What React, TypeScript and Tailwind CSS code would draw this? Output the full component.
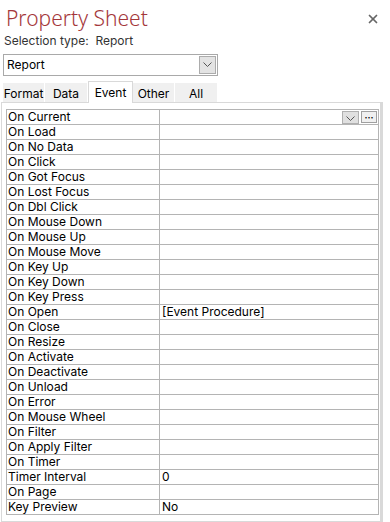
import { X } from "lucide-react";

const rows: [string, string][] = [
  ["On Current", ""],
  ["On Load", ""],
  ["On No Data", ""],
  ["On Click", ""],
  ["On Got Focus", ""],
  ["On Lost Focus", ""],
  ["On Dbl Click", ""],
  ["On Mouse Down", ""],
  ["On Mouse Up", ""],
  ["On Mouse Move", ""],
  ["On Key Up", ""],
  ["On Key Down", ""],
  ["On Key Press", ""],
  ["On Open", "[Event Procedure]"],
  ["On Close", ""],
  ["On Resize", ""],
  ["On Activate", ""],
  ["On Deactivate", ""],
  ["On Unload", ""],
  ["On Error", ""],
  ["On Mouse Wheel", ""],
  ["On Filter", ""],
  ["On Apply Filter", ""],
  ["On Timer", ""],
  ["Timer Interval", "0"],
  ["On Page", ""],
  ["Key Preview", "No"],
];

const tabs = ["Format", "Data", "Event", "Other", "All"];
const tabWidths = ["w-[42px]", "w-[43px]", "w-[45px]", "w-[42px]", "w-[43px]"];

function Chevron() {
  return (
    <svg width="9" height="6" viewBox="0 0 9 6" fill="none">
      <path d="M0.5 0.5 L4.5 4.5 L8.5 0.5" stroke="#555" strokeWidth="1" />
    </svg>
  );
}

export default function App() {
  return (
    <div
      className="w-[390px] h-[522px] bg-white text-black overflow-hidden"
      style={{ fontFamily: 'Inter, "Noto Sans", sans-serif' }}
    >
      <div className="flex items-start justify-between pl-[6px] pr-[10px] pt-[4px] h-[32px]">
        <h1
          className="text-[21px] leading-[28px] font-light text-[#a4373a]"
          style={{ fontFamily: '"Noto Sans", sans-serif' }}
        >
          Property Sheet
        </h1>
        <X className="w-[14px] h-[14px] mt-[8px] text-[#666]" strokeWidth={3} />
      </div>
      <div className="pl-[4px] text-[12px] leading-[18px] text-[#333]">Selection type:&nbsp; Report</div>

      <div className="ml-[3px] mt-[4px] w-[215px] h-[22px] border border-[#a9a9a9] flex items-center justify-between pl-[3px] pr-[1px]">
        <span className="text-[12px] leading-none">Report</span>
        <div className="w-[17px] h-[18px] bg-[#e3e3e3] border border-[#acacac] flex items-center justify-center">
          <Chevron />
        </div>
      </div>

      <div className="flex items-end ml-[3px] mt-[5px] h-[21px]">
        {tabs.map((t, i) =>
          t === "Event" ? (
            <div
              key={t}
              className={`${tabWidths[i]} h-[22px] bg-white border border-b-0 border-[#d9d9d9] flex items-start justify-center pt-[2px] text-[12px] relative z-10 -mb-px`}
            >
              {t}
            </div>
          ) : (
            <div
              key={t}
              className={`${tabWidths[i]} h-[19px] bg-[#f0f0f0] border-r border-[#ffffff] flex items-center justify-center text-[12px] pt-[3px]`}
            >
              {t}
            </div>
          )
        )}
      </div>

      <div className="ml-[1px] w-[382px] h-[420px] border border-[#d9d9d9] border-r-[3px] pt-[6px] pl-[4px]">
        <div className="w-[373px] border-t border-l border-r border-[#b4b4b4]">
          {rows.map(([name, val], i) => (
            <div key={name} className="flex h-[15px] border-b border-[#b4b4b4] text-[12px] leading-[14px]">
              <div className="w-[153px] border-r border-[#b4b4b4] pl-[1px] whitespace-nowrap">{name}</div>
              <div className="flex-1 flex items-center justify-between pl-[2px] pr-[1px]">
                <span>{val}</span>
                {i === 0 && (
                  <div className="flex items-center gap-[2px]">
                    <div className="w-[17px] h-[13px] bg-[#e0e0e0] border border-[#b0b0b0] flex items-end justify-center pb-[1px]">
                      <Chevron />
                    </div>
                    <div className="w-[16px] h-[12px] bg-[#f0f0f0] border border-[#a0a0a0] flex items-center justify-center text-[9px] font-bold leading-none">
                      ···
                    </div>
                  </div>
                )}
              </div>
            </div>
          ))}
        </div>
      </div>
    </div>
  );
}
